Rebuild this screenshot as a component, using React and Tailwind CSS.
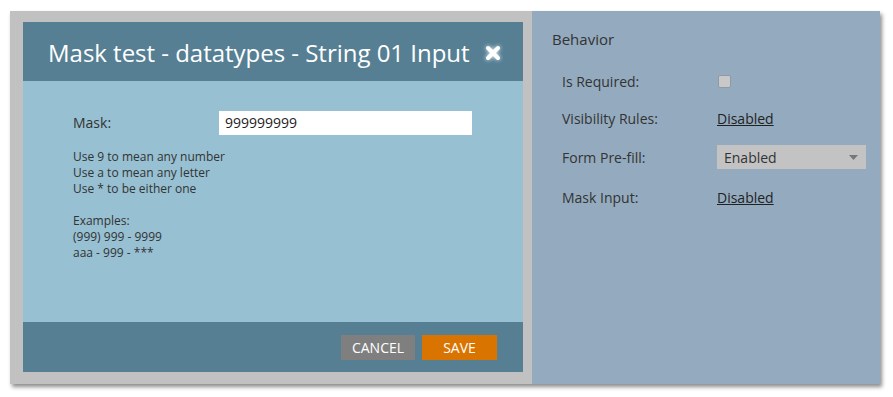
import React from 'react';

const font = { fontFamily: '"Open Sans", "Noto Sans", sans-serif' };

const Row = ({ label, h, children }) => (
    <div className={`flex items-center ${h}`}>
        <div className="w-[155px] text-[14px] text-[#333]">{label}</div>
        <div className="flex-1">{children}</div>
    </div>
);

export default function App() {
    return (
        <div className="w-[893px] h-[397px] bg-white relative overflow-hidden" style={font}>
            <div className="absolute left-[10px] top-[11px] w-[870px] h-[373px] flex shadow-[2px_3px_4px_rgba(0,0,0,0.45)]">
                {/* left gray backdrop with modal */}
                <div className="w-[522px] h-full bg-[#c1c1c1] pl-[13px] pt-[11px]">
                    <div className="w-[500px] h-[350px] flex flex-col">
                        <div className="h-[59px] bg-[#567f94] flex items-center pl-[25px] pr-[22px]">
                            <h1 className="text-[24px] text-white font-normal tracking-[-0.02px] leading-none mt-[2px]">
                                Mask test - datatypes - String 01 Input
                            </h1>
                            <svg className="ml-auto mt-[2px] drop-shadow-[0_0_2px_rgba(255,255,255,0.9)]" width="16" height="16" viewBox="0 0 16 16">
                                <path d="M3 3 L13 13 M13 3 L3 13" stroke="white" strokeWidth="4" strokeLinecap="round" />
                            </svg>
                        </div>
                        <div className="flex-1 bg-[#97c0d2] pl-[50px] pt-[29px] text-[#333]">
                            <div className="flex items-center h-[25px]">
                                <span className="w-[146px] text-[14px]">Mask:</span>
                                <div className="w-[253px] h-[24px] bg-white flex items-center pl-[6px] text-[14px] text-[#222]">
                                    999999999
                                </div>
                            </div>
                            <div className="mt-[14px] text-[12px] leading-[16px]">
                                <div>Use 9 to mean any number</div>
                                <div>Use a to mean any letter</div>
                                <div>Use * to be either one</div>
                                <div className="h-[16px]" />
                                <div>Examples:</div>
                                <div>(999) 999 - 9999</div>
                                <div>aaa - 999 - ***</div>
                            </div>
                        </div>
                        <div className="h-[50px] bg-[#567f94] flex items-center justify-end gap-[7px] pr-[26px]">
                            <button className="w-[74px] h-[25px] bg-[#7f7f7f] text-white text-[14px]">CANCEL</button>
                            <button className="w-[75px] h-[25px] bg-[#d97400] text-white text-[14px]">SAVE</button>
                        </div>
                    </div>
                </div>
                {/* right properties panel */}
                <div className="flex-1 h-full bg-[#94abbf] pl-[20px] pt-[17px]">
                    <div className="text-[15px] text-[#333] mb-[11px]">Behavior</div>
                    <div className="pl-[10px]">
                        <Row label="Is Required:" h="h-[39px]">
                            <div className="w-[13px] h-[13px] ml-[1px] rounded-[2px] bg-[#c8c8c8] border border-[#8f9aa5]" />
                        </Row>
                        <Row label="Visibility Rules:" h="h-[35px]">
                            <span className="text-[14px] underline text-[#222]">Disabled</span>
                        </Row>
                        <Row label="Form Pre-fill:" h="h-[43px]">
                            <div className="w-[149px] h-[24px] bg-[#c3c3c3] flex items-center pl-[7px] pr-[8px] text-[14px] text-[#333]">
                                Enabled
                                <svg className="ml-auto" width="9" height="5" viewBox="0 0 9 5">
                                    <path d="M0 0 H9 L4.5 5 Z" fill="#777" />
                                </svg>
                            </div>
                        </Row>
                        <Row label="Mask Input:" h="h-[37px]">
                            <span className="text-[14px] underline text-[#222]">Disabled</span>
                        </Row>
                    </div>
                </div>
            </div>
        </div>
    );
}
